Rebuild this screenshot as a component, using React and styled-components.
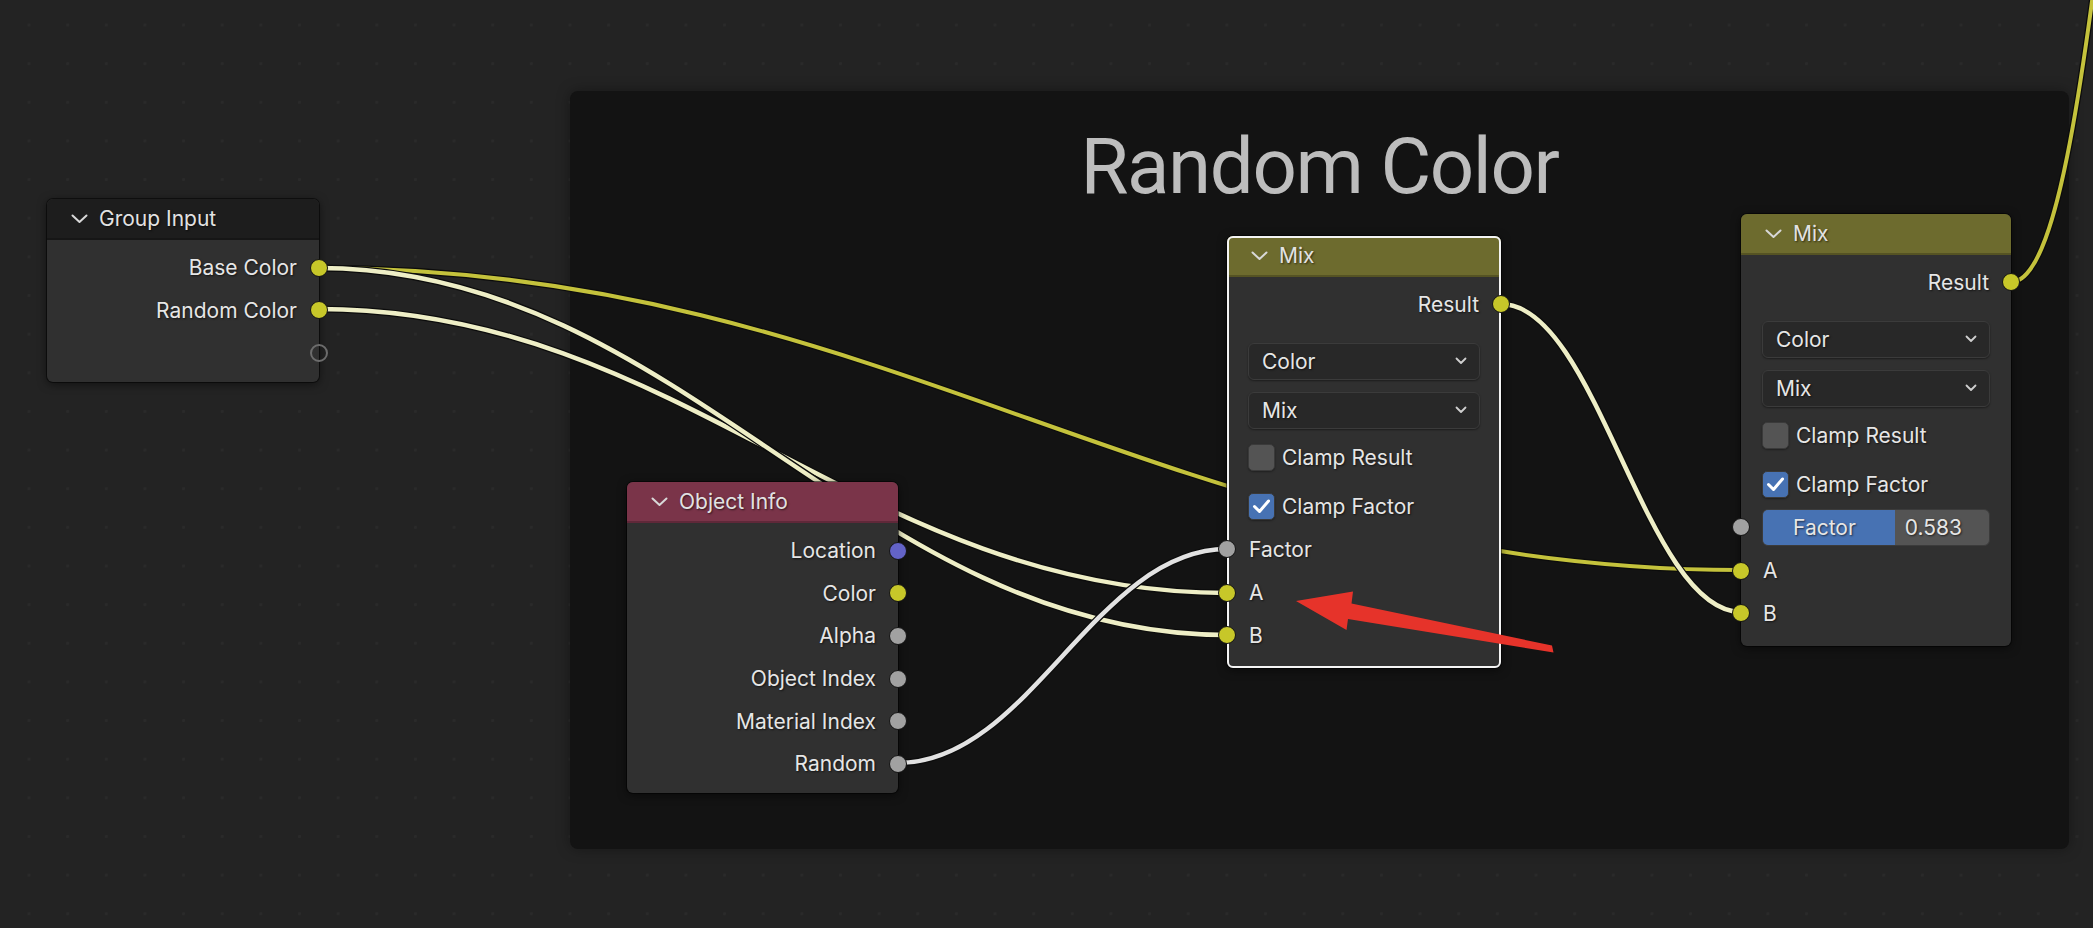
import React from 'react';
import styled, { createGlobalStyle, css } from 'styled-components';

const GlobalStyle = createGlobalStyle`
  html, body { margin: 0; padding: 0; background: #232323; }
  body { font-family: Inter, "Noto Sans", sans-serif; -webkit-font-smoothing: antialiased; }
`;

const Canvas = styled.div`
  position: relative;
  width: 2093px;
  height: 928px;
  overflow: hidden;
  background-color: #232323;
  background-image: radial-gradient(circle at center, #2a2a2a 0, #2a2a2a 1.3px, transparent 1.9px);
  background-size: 38.65px 38.65px;
  background-position: 9.7px 5.7px;
`;

const Frame = styled.div`
  position: absolute;
  left: 570px;
  top: 91px;
  width: 1499px;
  height: 758px;
  box-sizing: border-box;
  background: #131313;
  border-radius: 8px;
  box-shadow: 0 0 14px rgba(0, 0, 0, 0.35);
  display: flex;
  flex-direction: column;
  align-items: center;
  padding-top: 37px;
`;

const FrameTitle = styled.h1`
  margin: 0;
  font-family: Roboto, Inter, sans-serif;
  font-size: 78px;
  letter-spacing: -1.4px;
  line-height: 1;
  font-weight: 400;
  color: #bdbdbd;
`;

const Layer = styled.svg`
  position: absolute;
  left: 0;
  top: 0;
  width: 2093px;
  height: 928px;
  pointer-events: none;
  z-index: ${(p) => p.$z};
`;

const NodeBox = styled.div`
  position: absolute;
  left: ${(p) => p.$x}px;
  top: ${(p) => p.$y}px;
  width: ${(p) => p.$w}px;
  background: #303030;
  border-radius: 6px;
  box-shadow: 0 2px 10px rgba(0, 0, 0, 0.55), 0 0 0 1px rgba(0, 0, 0, 0.5);
  z-index: 2;
  color: #e4e4e4;
  font-size: 21px;
  ${(p) =>
    p.$selected &&
    css`
      &::after {
        content: '';
        position: absolute;
        inset: 0;
        border: 2px solid #f4f4f4;
        border-radius: 6px;
        pointer-events: none;
        z-index: 0;
      }
    `}
`;

const NodeHeader = styled.div`
  height: 41px;
  box-sizing: border-box;
  background: ${(p) => p.$color};
  border-radius: 6px 6px 0 0;
  border-bottom: 2px solid rgba(0, 0, 0, 0.22);
  display: flex;
  align-items: center;
  gap: 11px;
  padding-left: 24px;
  color: #e2e2e2;
  text-shadow: 1px 1px 2px rgba(0, 0, 0, 0.6);
`;

const NodeBody = styled.div`
  display: flex;
  flex-direction: column;
  padding: ${(p) => p.$pt}px 0 ${(p) => p.$pb}px;
`;

const SocketRow = styled.div`
  position: relative;
  height: 42.6px;
  margin-top: ${(p) => p.$mt || 0}px;
  display: flex;
  align-items: center;
  justify-content: ${(p) => (p.$out ? 'flex-end' : 'flex-start')};
  padding: 0 22px;
`;

const Label = styled.span`
  color: #e6e6e6;
  text-shadow: 1px 1px 2px rgba(0, 0, 0, 0.6);
  white-space: nowrap;
`;

const Socket = styled.span`
  position: absolute;
  top: 50%;
  ${(p) => (p.$out ? 'right' : 'left')}: -9px;
  transform: translateY(-50%);
  width: 18px;
  height: 18px;
  box-sizing: border-box;
  border-radius: 50%;
  background: ${(p) => (p.$hollow ? 'transparent' : p.$color)};
  border: ${(p) => (p.$hollow ? '2px solid #6c6c6c' : '1.5px solid #141414')};
  z-index: 1;
`;

const Dropdown = styled.div`
  margin: ${(p) => p.$mt}px 21px 0;
  height: 37px;
  box-sizing: border-box;
  background: #282828;
  border: 1px solid #3b3b3b;
  border-radius: 6px;
  box-shadow: 0 1px 2px rgba(0, 0, 0, 0.4);
  display: flex;
  align-items: center;
  justify-content: space-between;
  padding: 0 12px 0 13px;
`;

const CheckRow = styled.div`
  height: 42.6px;
  margin-top: ${(p) => p.$mt || 0}px;
  display: flex;
  align-items: center;
  gap: 7px;
  padding: 0 21px;
`;

const Checkbox = styled.span`
  width: 27px;
  height: 27px;
  box-sizing: border-box;
  border-radius: 5px;
  background: ${(p) => (p.$checked ? '#4772b3' : '#545454')};
  border: 1px solid #3a3a3a;
  box-shadow: 0 1px 2px rgba(0, 0, 0, 0.35);
  display: flex;
  align-items: center;
  justify-content: center;
`;

const SliderRow = styled.div`
  position: relative;
  height: 42.6px;
  display: flex;
  align-items: center;
  padding: 0 21px;
`;

const Slider = styled.div`
  position: relative;
  flex: 1;
  height: 37px;
  box-sizing: border-box;
  border-radius: 6px;
  overflow: hidden;
  background: #545454;
  border: 1px solid #3b3b3b;
  display: flex;
  align-items: center;
  justify-content: space-between;
  padding: 0 27px 0 30px;
`;

const SliderFill = styled.div`
  position: absolute;
  left: 0;
  top: 0;
  bottom: 0;
  background: #4772b3;
`;

const SliderText = styled(Label)`
  position: relative;
`;

const YELLOW = '#c7c729';
const GREY = '#a1a1a1';
const BLUE = '#6363c7';

const Chevron = () => (
  <svg width="17" height="10" viewBox="0 0 17 10">
    <path d="M1.5 1.5 L8.5 8 L15.5 1.5" fill="none" stroke="#d8d8d8" strokeWidth="2" strokeLinecap="round" strokeLinejoin="round" />
  </svg>
);

const SmallChevron = () => (
  <svg width="12" height="8" viewBox="0 0 12 8">
    <path d="M1.5 1.5 L6 6 L10.5 1.5" fill="none" stroke="#cfcfcf" strokeWidth="1.8" strokeLinecap="round" strokeLinejoin="round" />
  </svg>
);

const Check = () => (
  <svg width="21" height="21" viewBox="0 0 21 21">
    <path d="M3.5 10.5 L8.5 15.5 L17.5 5" fill="none" stroke="#ffffff" strokeWidth="3" strokeLinecap="round" strokeLinejoin="round" />
  </svg>
);

const Node = ({ x, y, w, title, color, selected, pt = 6.5, pb = 7.5, children }) => (
  <NodeBox $x={x} $y={y} $w={w} $selected={selected}>
    <NodeHeader $color={color}>
      <Chevron />
      <span>{title}</span>
    </NodeHeader>
    <NodeBody $pt={pt} $pb={pb}>{children}</NodeBody>
  </NodeBox>
);

const Output = ({ label, color, hollow, mt }) => (
  <SocketRow $out $mt={mt}>
    {label && <Label>{label}</Label>}
    <Socket $out $color={color} $hollow={hollow} />
  </SocketRow>
);

const Input = ({ label, color, mt }) => (
  <SocketRow $mt={mt}>
    <Label>{label}</Label>
    <Socket $color={color} />
  </SocketRow>
);

const Select = ({ value, mt }) => (
  <Dropdown $mt={mt}>
    <Label>{value}</Label>
    <SmallChevron />
  </Dropdown>
);

const Toggle = ({ label, checked, mt }) => (
  <CheckRow $mt={mt}>
    <Checkbox $checked={checked}>{checked && <Check />}</Checkbox>
    <Label>{label}</Label>
  </CheckRow>
);

const FactorSlider = ({ value }) => (
  <SliderRow>
    <Socket $color={GREY} />
    <Slider>
      <SliderFill style={{ width: `${value * 100}%` }} />
      <SliderText>Factor</SliderText>
      <SliderText>{value.toFixed(3)}</SliderText>
    </Slider>
  </SliderRow>
);

const MixNode = ({ x, y, w, selected, slider }) => (
  <Node x={x} y={y} w={w} title="Mix" color="#6d6b2e" selected={selected} pt={6} pb={11}>
    <Output label="Result" color={YELLOW} />
    <Select value="Color" mt={17} />
    <Select value="Mix" mt={12} />
    <Toggle label="Clamp Result" mt={8} />
    <Toggle label="Clamp Factor" checked mt={6} />
    {slider ? <FactorSlider value={0.583} /> : <Input label="Factor" color={GREY} />}
    <Input label="A" color={YELLOW} mt={1} />
    <Input label="B" color={YELLOW} />
  </Node>
);

const bez = (x0, y0, x1, y1, k = 0.4) => {
  const d = k * Math.abs(x1 - x0);
  return `M${x0} ${y0} C${x0 + d} ${y0} ${x1 - d} ${y1} ${x1} ${y1}`;
};

const CREAM = '#eeeec6';
const WIRES = [
  { d: bez(319, 268, 1741, 570), c: '#c4c23c', w: 4 },
  { d: bez(319, 309, 1227, 593), c: CREAM, w: 4.5 },
  { d: bez(319, 268, 1227, 635), c: CREAM, w: 4.5 },
  { d: bez(898, 763, 1227, 549), c: '#e2e2e2', w: 4.5 },
  { d: bez(1501, 304, 1741, 612), c: CREAM, w: 4.5 },
  { d: 'M2011 282 C2108 282 2112 -600 2230 -600', c: '#c4c23c', w: 4 },
];

const Wires = () => (
  <Layer $z={1} viewBox="0 0 2093 928">
    {WIRES.map((wr, i) => (
      <g key={i}>
        <path d={wr.d} fill="none" stroke="#0c0c0c" strokeWidth={wr.w + 2.5} strokeLinecap="round" />
        <path d={wr.d} fill="none" stroke={wr.c} strokeWidth={wr.w} strokeLinecap="round" />
      </g>
    ))}
  </Layer>
);

const Arrow = () => (
  <Layer $z={3} viewBox="0 0 2093 928">
    <polygon
      points="1296,601 1353,591.5 1351.5,603.5 1552,645.5 1553.5,652.5 1348,619 1346.5,630"
      fill="#e6332a"
    />
  </Layer>
);

export default function App() {
  return (
    <>
      <GlobalStyle />
      <Canvas>
        <Frame>
          <FrameTitle>Random Color</FrameTitle>
        </Frame>
        <Wires />
        <Node x={47} y={199} w={272} title="Group Input" color="#1d1d1d">
          <Output label="Base Color" color={YELLOW} />
          <Output label="Random Color" color={YELLOW} />
          <Output hollow />
        </Node>
        <Node x={627} y={482} w={271} title="Object Info" color="#7a3449">
          <Output label="Location" color={BLUE} />
          <Output label="Color" color={YELLOW} />
          <Output label="Alpha" color={GREY} />
          <Output label="Object Index" color={GREY} />
          <Output label="Material Index" color={GREY} />
          <Output label="Random" color={GREY} />
        </Node>
        <MixNode x={1227} y={236} w={274} selected />
        <MixNode x={1741} y={214} w={270} slider />
        <Arrow />
      </Canvas>
    </>
  );
}
